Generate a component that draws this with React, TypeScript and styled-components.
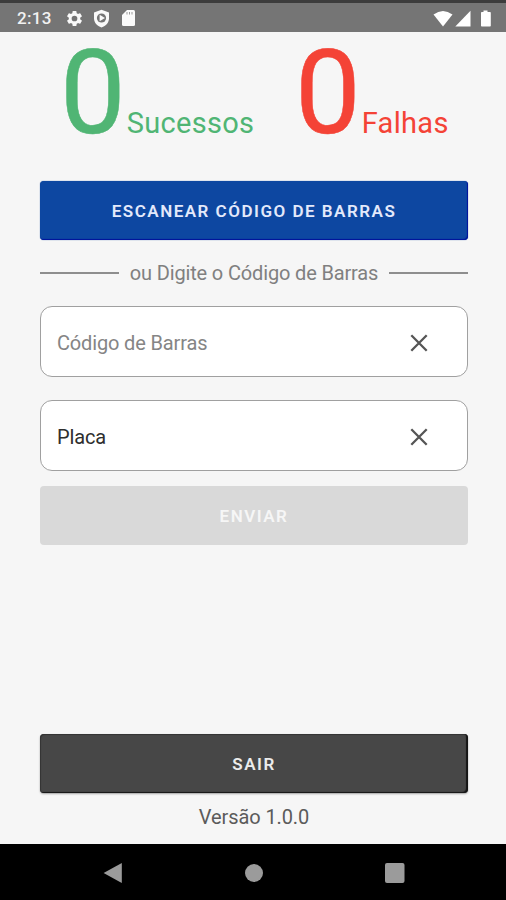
import React from "react";
import styled, { createGlobalStyle } from "styled-components";

const GlobalStyle = createGlobalStyle`
  *, *::before, *::after { box-sizing: border-box; }
  body { margin: 0; background: #f6f6f6; font-family: Roboto, sans-serif; }
`;

const Screen = styled.div`
  display: flex;
  flex-direction: column;
  width: 506px;
  height: 900px;
  overflow: hidden;
  background: #f6f6f6;
`;

const StatusBar = styled.header`
  display: flex;
  align-items: center;
  flex: none;
  height: 32px;
  padding: 1px 15px 0 17px;
  border-top: 3px solid #3c3c3c;
  background: #757575;
  color: #f2f2f2;
`;

const Clock = styled.span`
  width: 48px;
  font-size: 17px;
  font-weight: 500;
  line-height: 20px;
  letter-spacing: 0.35px;
`;

const StatusIcons = styled.div<{ $gap: number; $end?: boolean }>`
  display: flex;
  align-items: center;
  gap: ${(p) => p.$gap}px;
  margin-left: ${(p) => (p.$end ? "auto" : "0")};

  svg { display: block; }
`;

const Content = styled.main`
  display: flex;
  flex-direction: column;
  flex: 1;
  padding: 0 38px 0 40px;
`;

const Scores = styled.section`
  display: grid;
  grid-template-columns: 235px 1fr;
  height: 149px;
  padding-left: 20px;
`;

const Score = styled.div<{ $color: string }>`
  display: flex;
  align-items: baseline;
  gap: 1px;
  height: 122px;
  white-space: nowrap;
  color: ${(p) => p.$color};
`;

const ScoreValue = styled.span`
  font-size: 117px;
  line-height: 122px;
  -webkit-text-stroke: 0.5px currentColor;
`;

const ScoreLabel = styled.span`
  font-size: 29px;
  line-height: 36px;
  letter-spacing: 0.3px;
`;

const buttonLooks = {
  primary: "background: #0d47a1; color: #e3e9fb; box-shadow: inset -1px -1px 1px #00109c, 0 0 1px #0d47a1;",
  disabled: "background: #d9d9d9; color: #f6f6f6;",
  dark: "background: #474747; color: #ececec; box-shadow: inset -2px -1px 1px #151515, inset 1px 1px 1px #333, 0 1px 2px rgba(0,0,0,.35);",
};

const Button = styled.button<{ $look: keyof typeof buttonLooks }>`
  flex: none;
  width: 100%;
  height: 59px;
  padding: 0;
  border: 0;
  border-radius: 4px;
  font: 600 17px/24px Roboto, sans-serif;
  letter-spacing: 1.5px;
  ${(p) => buttonLooks[p.$look]}
`;

const Divider = styled.div`
  display: flex;
  align-items: center;
  justify-content: space-between;
  height: 66px;
  color: #808080;
  font-size: 20px;
  line-height: 24px;
  white-space: nowrap;
`;

const Rule = styled.span`
  width: 79px;
  height: 2px;
  background: #8e8e8e;
`;

const DividerText = styled.span`
  letter-spacing: -0.15px;
`;

const Field = styled.div<{ $gapAfter: number }>`
  display: flex;
  align-items: center;
  justify-content: space-between;
  flex: none;
  height: 71px;
  margin-bottom: ${(p) => p.$gapAfter}px;
  padding: 3px 38px 0 16px;
  border: 1.5px solid #a0a0a0;
  border-radius: 12px;
  background: #fff;
`;

const FieldText = styled.span<{ $color: string }>`
  color: ${(p) => p.$color};
  font-size: 20px;
  line-height: 24px;
  letter-spacing: -0.15px;
`;

const ClearIcon = styled.svg`
  display: block;
  width: 20px;
  height: 20px;
`;

const Footer = styled.footer`
  margin-top: auto;
  height: 110px;
`;

const Version = styled.p`
  margin: 12px 0 0;
  color: #5b5b5b;
  font-size: 20px;
  line-height: 24px;
  letter-spacing: -0.1px;
  text-align: center;
`;

const NavBar = styled.nav`
  display: grid;
  grid-template-columns: repeat(3, 20px);
  column-gap: 121px;
  align-items: center;
  flex: none;
  height: 56px;
  padding: 2px 0 0 103px;
  background: #000;

  svg { display: block; }
`;

const Clear = () => (
  <ClearIcon viewBox="0 0 20 20">
    <path d="M2.3 2.3 17.7 17.7M17.7 2.3 2.3 17.7" stroke="#555" strokeWidth="2.3" fill="none" />
  </ClearIcon>
);

export default function App() {
  return (
    <>
      <GlobalStyle />
      <Screen>
        <StatusBar>
          <Clock>2:13</Clock>
          <StatusIcons $gap={9}>
            <svg width="19" height="19" viewBox="0 0 24 24" fill="#fafafa">
              <path d="M19.14 12.94c.04-.3.06-.61.06-.94s-.02-.64-.07-.94l2.03-1.58a.49.49 0 0 0 .12-.61l-1.92-3.32a.49.49 0 0 0-.59-.22l-2.39.96a7 7 0 0 0-1.62-.94l-.36-2.54a.48.48 0 0 0-.48-.41h-3.84a.48.48 0 0 0-.47.41l-.36 2.54c-.59.24-1.13.57-1.62.94l-2.39-.96a.48.48 0 0 0-.59.22L2.74 8.87a.48.48 0 0 0 .12.61l2.03 1.58a6 6 0 0 0 0 1.88l-2.03 1.58a.49.49 0 0 0-.12.61l1.92 3.32c.12.22.37.29.59.22l2.39-.96c.5.38 1.03.7 1.62.94l.36 2.54c.05.24.24.41.48.41h3.84c.24 0 .44-.17.47-.41l.36-2.54c.59-.24 1.13-.56 1.62-.94l2.39.96c.22.08.47 0 .59-.22l1.92-3.32a.48.48 0 0 0-.12-.61zM12 15.6a3.6 3.6 0 1 1 0-7.2 3.6 3.6 0 0 1 0 7.2" />
            </svg>
            <svg width="17" height="19" viewBox="0 0 17 19">
              <path d="M8.5.8 16 3.6v5.6c0 4.5-3 7.6-7.5 9.2C4 16.8 1 13.7 1 9.2V3.6z" fill="#fafafa" />
              <circle cx="8.5" cy="9" r="4.6" fill="#757575" />
              <path d="M6.6 5.7 12 9l-5.4 3.3z" fill="#fafafa" />
            </svg>
            <svg width="19" height="18" viewBox="0 0 19 18">
              <path d="M8 1h6.500q1.500 0 1.500 1.500v13q0 1.500-1.500 1.500h-10Q3 17 3 15.500V6z" fill="#fafafa" />
              <path d="M8 3v2.500M10.500 3v2.500M13 3v2.500" stroke="#999" strokeWidth="1" />
            </svg>
          </StatusIcons>
          <StatusIcons $gap={2} $end>
            <svg width="20" height="17" viewBox="0 0 20 17">
              <path d="M.5 4.500Q10-2.500 19.500 4.500L10 16.500z" fill="#fff" />
            </svg>
            <svg width="16" height="17" viewBox="0 0 16 17">
              <path d="M15.500.8v15.700H.3z" fill="#fff" />
            </svg>
            <svg width="18" height="17" viewBox="0 0 18 17">
              <path d="M10.500.5h4v1.500H17a.8.8 0 0 1 .8.8v12.900a.8.8 0 0 1-.8.8H8.800a.8.8 0 0 1-.8-.8V2.800a.8.8 0 0 1 .8-.8h1.700z" fill="#fff" />
            </svg>
          </StatusIcons>
        </StatusBar>
        <Content>
          <Scores>
            <Score $color="#50b574">
              <ScoreValue>0</ScoreValue>
              <ScoreLabel>Sucessos</ScoreLabel>
            </Score>
            <Score $color="#f44336">
              <ScoreValue>0</ScoreValue>
              <ScoreLabel>Falhas</ScoreLabel>
            </Score>
          </Scores>
          <Button $look="primary">ESCANEAR CÓDIGO DE BARRAS</Button>
          <Divider>
            <Rule />
            <DividerText>ou Digite o Código de Barras</DividerText>
            <Rule />
          </Divider>
          <Field $gapAfter={23}>
            <FieldText $color="#858585">Código de Barras</FieldText>
            <Clear />
          </Field>
          <Field $gapAfter={15}>
            <FieldText $color="#2e2e2e">Placa</FieldText>
            <Clear />
          </Field>
          <Button $look="disabled">ENVIAR</Button>
          <Footer>
            <Button $look="dark">SAIR</Button>
            <Version>Versão 1.0.0</Version>
          </Footer>
        </Content>
        <NavBar>
          <svg width="20" height="22" viewBox="0 0 20 22">
            <path d="M18.800 1v20L.6 11z" fill="#9b9b9b" />
          </svg>
          <svg width="20" height="20" viewBox="0 0 20 20">
            <circle cx="10" cy="10" r="9" fill="#9b9b9b" />
          </svg>
          <svg width="20" height="20" viewBox="0 0 20 20">
            <rect x="0" y="0" width="19.500" height="20" rx="2" fill="#9b9b9b" />
          </svg>
        </NavBar>
      </Screen>
    </>
  );
}
